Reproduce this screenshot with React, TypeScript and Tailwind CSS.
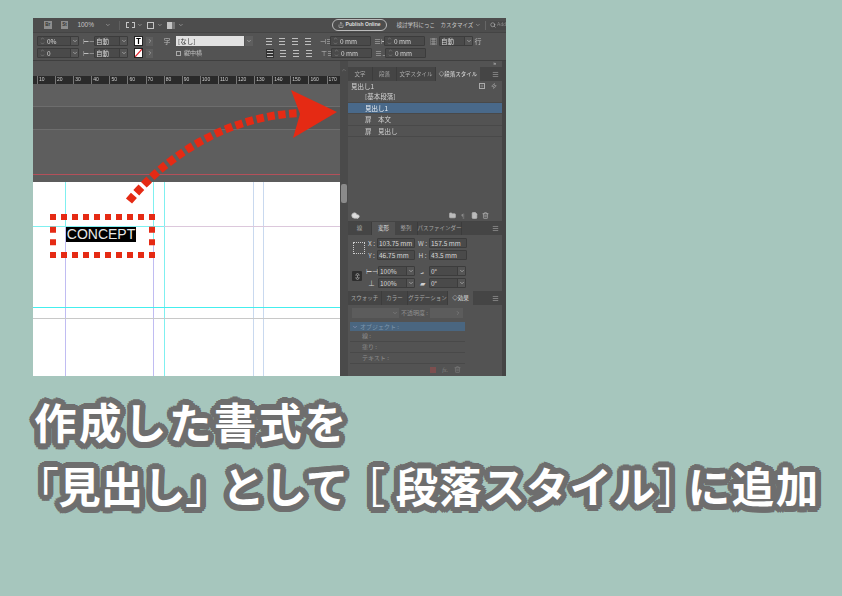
import { ChevronDown, ChevronRight, ChevronUp, Share, Search, Plus, Zap, Folder, Trash2, FilePlus, Cloud, Link2, Menu } from "lucide-react";
import type { ReactNode } from "react";

const jp = "font-['Noto_Sans_CJK_JP','Noto_Sans',sans-serif]";

function Spin() {
  return (
    <span className="flex flex-col items-center w-[8px] text-[#a8a8a8] shrink-0">
      <ChevronUp size={5} strokeWidth={2} />
      <ChevronDown size={5} strokeWidth={2} />
    </span>
  );
}

function Field({ w, children, spin, drop }: { w: string; children: ReactNode; spin?: boolean; drop?: boolean }) {
  return (
    <div className={`${w} h-[10px] flex items-center border border-[#3c3c3c] bg-[#4a4a4a] rounded-[1px] text-[6.5px] leading-none text-[#d8d8d8] shrink-0`}>
      {spin && <Spin />}
      <span className="pl-[1px] flex-1 whitespace-nowrap">{children}</span>
      {drop && (
        <span className="w-[8px] h-full flex items-center justify-center bg-[#555] border-l border-[#3c3c3c]">
          <ChevronDown size={6} strokeWidth={2.5} className="text-[#c0c0c0]" />
        </span>
      )}
    </div>
  );
}

function Lines({ dark }: { dark?: boolean }) {
  return (
    <span className={`w-[8px] h-[9px] flex flex-col justify-between py-[1px] px-[1px] shrink-0 ${dark ? "bg-[#333]" : ""}`}>
      <span className="h-[1px] bg-[#bdbdbd]" />
      <span className="h-[1px] bg-[#bdbdbd]" />
      <span className="h-[1px] bg-[#bdbdbd]" />
    </span>
  );
}

function Glyph({ c, w = "w-[8px]" }: { c: string; w?: string }) {
  return <span className={`${w} text-center text-[7px] leading-none text-[#bdbdbd] shrink-0`}>{c}</span>;
}

function TopBar() {
  return (
    <div className="h-[14px] flex items-center bg-[#4d4d4d] text-[#c4c4c4] text-[6.5px] pl-[11px]">
      <span className="w-[8px] h-[8px] bg-[#8d8d8d] text-[4.5px] leading-[8px] text-center text-[#333] font-bold">Br</span>
      <span className="ml-[9px] w-[8px] h-[8px] bg-[#8d8d8d] text-[4.5px] leading-[8px] text-center text-[#333] font-bold">St</span>
      <span className="ml-[9px] w-[26px]">100%</span>
      <ChevronDown size={6} className="ml-[3px]" />
      <span className="ml-[8px] w-[1px] h-[9px] bg-[#5f5f5f]" />
      <span className="ml-[6px] w-[9px] h-[6px] border border-dashed border-[#c4c4c4]" />
      <ChevronDown size={6} className="ml-[2px]" />
      <span className="ml-[4px] w-[8px] h-[7px] border border-[#c4c4c4]" />
      <ChevronDown size={6} className="ml-[3px]" />
      <span className="ml-[4px] w-[8px] h-[7px] bg-[#c4c4c4] border-r-[3px] border-[#777]" />
      <ChevronDown size={6} className="ml-[3px]" />
      <div className="ml-[148px] w-[57px] h-[12px] border border-[#bbb] rounded-full flex items-center justify-center gap-[2px] text-[5px] font-bold text-[#ddd] whitespace-nowrap">
        <Share size={6} />
        Publish Online
      </div>
      <span className={`ml-[10px] text-[5.5px] ${jp} whitespace-nowrap text-[#c8c8c8]`}>検討学科にっこ　カスタマイズ</span>
      <ChevronDown size={6} className="ml-[2px]" />
      <span className="ml-[4px] w-[1px] h-[9px] bg-[#666]" />
      <span className="ml-[4px] flex-1 h-[9px] bg-[#484848] flex items-center gap-[1px] text-[5px] text-[#888]">
        <Search size={6} className="text-[#ccc]" />
        Add
      </span>
    </div>
  );
}

function ControlPanel() {
  return (
    <div className={`h-[29px] bg-[#535353] border-t border-[#444] border-b border-b-[#3f3f3f] flex flex-col gap-[2px] pt-[3px] pl-[4px] ${jp}`}>
      <div className="flex items-center h-[10px]">
        <Field w="w-[42px]" spin drop>0%</Field>
        <Glyph c="⊢⊣" w="ml-[4px] w-[10px]" />
        <div className="ml-[1px]"><Field w="w-[34px]" drop>自動</Field></div>
        <span className="ml-[6px] w-[9px] h-[10px] bg-white border border-[#222] text-[8px] leading-[8px] font-bold text-center text-black">T</span>
        <span className="ml-[3px] w-[7px] h-[9px] flex items-center justify-center bg-[#5e5e5e]"><ChevronRight size={6} className="text-[#ccc]" /></span>
        <Glyph c="字" w="ml-[10px] w-[8px]" />
        <div className="ml-[5px] w-[68px] h-[10px] bg-[#e2e2e2] text-[#333] text-[6.5px] leading-[10px] pl-[2px]">[なし]</div>
        <span className="ml-[1px] w-[8px] h-[10px] flex items-center justify-center bg-[#5e5e5e]"><ChevronDown size={6} className="text-[#ccc]" /></span>
        <span className="ml-[12px] flex gap-[5px]"><Lines /><Lines /><Lines /><Lines /></span>
        <Glyph c="⊣≡" w="ml-[8px] w-[9px]" />
        <div className="ml-[1px]"><Field w="w-[41px]" spin>0 mm</Field></div>
        <Glyph c="≡⊢" w="ml-[3px] w-[9px]" />
        <div className="ml-[1px]"><Field w="w-[41px]" spin>0 mm</Field></div>
        <Glyph c="▦" w="ml-[4px] w-[9px]" />
        <div className="ml-[1px]"><Field w="w-[34px]" drop>自動</Field></div>
        <Glyph c="行" w="ml-[1px] w-[8px]" />
      </div>
      <div className="flex items-center h-[10px]">
        <Field w="w-[42px]" spin drop>0</Field>
        <Glyph c="⊢⊣" w="ml-[4px] w-[10px]" />
        <div className="ml-[1px]"><Field w="w-[34px]" drop>自動</Field></div>
        <svg viewBox="0 0 9 10" className="ml-[6px] w-[9px] h-[10px] bg-white border border-[#222]"><path d="M0 10 9 0" stroke="#e3262e" strokeWidth="1.6" /></svg>
        <span className="ml-[3px] w-[7px] h-[9px] flex items-center justify-center bg-[#5e5e5e]"><ChevronRight size={6} className="text-[#ccc]" /></span>
        <span className="ml-[23px] w-[5px] h-[5px] border border-[#aaa]" />
        <span className="ml-[3px] text-[6px] leading-none text-[#c4c4c4] whitespace-nowrap w-[82px]">縦中横</span>
        <span className="flex gap-[5px]"><Lines dark /><Lines /><Lines /><Lines /></span>
        <Glyph c="⊤≡" w="ml-[8px] w-[9px]" />
        <div className="ml-[1px]"><Field w="w-[41px]" spin>0 mm</Field></div>
        <Glyph c="≡⊥" w="ml-[3px] w-[9px]" />
        <div className="ml-[1px]"><Field w="w-[41px]" spin>0 mm</Field></div>
      </div>
    </div>
  );
}

function Ruler() {
  const labels = [10, 20, 30, 40, 50, 60, 70, 80, 90, 100, 110, 120, 130, 140, 150, 160, 170];
  return (
    <div className="h-[8px] bg-[#2a2a2a] flex pl-[4px] overflow-hidden">
      {labels.map((n) => (
        <span key={n} className="w-[18.1px] shrink-0 border-l border-[#777] pl-[1px] text-[5px] leading-[7px] text-[#cfcfcf]">{n}</span>
      ))}
    </div>
  );
}

function Canvas() {
  return (
    <div className="flex-1 flex flex-col">
      <Ruler />
      <div className="h-[23px] bg-[#5f5f5f] border-b border-[#6d6d6d]" />
      <div className="h-[23px] bg-[#565656] border-b border-[#6d6d6d]" />
      <div className="h-[45px] bg-[#5e5e5e] border-b border-[#b3505a]" />
      <div className="h-[7px] bg-[#5c5c5c]" />
      <div className="flex-1 bg-white relative">
        <span className="absolute left-[32px] top-0 w-[1px] h-[44px] bg-[#7ff0f0]" />
        <span className="absolute left-[32px] top-[44px] bottom-0 w-[1px] bg-[#c0bcf2]" />
        <span className="absolute left-[120px] top-0 bottom-0 w-[1px] bg-[#7ff0f0]" />
        <span className="absolute left-[131px] top-0 bottom-0 w-[1px] bg-[#7ff0f0]" />
        <span className="absolute left-[120px] top-[60px] bottom-0 w-[1px] bg-[#c0bcf2]" />
        <span className="absolute left-[220px] top-0 bottom-0 w-[1px] bg-[#c9d9ef]" />
        <span className="absolute left-[230px] top-0 bottom-0 w-[1px] bg-[#c9d9ef]" />
        <span className="absolute left-0 top-[44px] w-[131px] h-[1px] bg-[#7ff0f0]" />
        <span className="absolute left-[131px] right-0 top-[44px] h-[1px] bg-[#dcc8dc]" />
        <span className="absolute left-0 right-0 top-[125px] h-[1px] bg-[#44eeee]" />
        <span className="absolute left-0 right-0 top-[136px] h-[1px] bg-[#c8c8c8]" />
        <span className="absolute left-[33px] top-[45px] w-[70px] h-[15px] bg-black text-[#e8e8e8] text-[14px] leading-[15px] text-center font-['Liberation_Sans',sans-serif] whitespace-nowrap">CONCEPT</span>
      </div>
    </div>
  );
}

function Tabs({ items, active, h = "h-[14px]" }: { items: { t: string; w: string }[]; active: number; h?: string }) {
  return (
    <div className={`${h} flex items-stretch bg-[#454545] text-[5.5px] text-[#a8a8a8] whitespace-nowrap ${jp}`}>
      {items.map((it, i) => (
        <span key={it.t} className={`${it.w} flex items-center justify-center ${i === active ? "bg-[#535353] text-[#e0e0e0]" : "border-r border-[#3c3c3c]"}`}>
          {it.t}
        </span>
      ))}
      <span className="flex-1 flex items-center justify-end pr-[3px]"><Menu size={7} className="text-[#aaa]" /></span>
    </div>
  );
}

function StyleRow({ children, selected }: { children: ReactNode; selected?: boolean }) {
  return (
    <div className={`h-[11.5px] pl-[17px] flex items-center text-[6.5px] leading-none border-b border-[#494949] ${selected ? "bg-[#49698a] text-[#ecf1f6]" : "text-[#d4d4d4]"}`}>
      {children}
    </div>
  );
}

function ParagraphStyles() {
  return (
    <div className="flex-1 flex flex-col bg-[#535353]">
      <div className="h-[6px] flex justify-end pr-[6px] text-[5px] leading-[5px] text-[#ccc]">»</div>
      <Tabs
        active={3}
        items={[
          { t: "文字", w: "w-[25px]" },
          { t: "段落", w: "w-[24px]" },
          { t: "文字スタイル", w: "w-[39px]" },
          { t: "◇段落スタイル", w: "w-[44px]" },
        ]}
      />
      <div className={`flex-1 flex flex-col ${jp}`}>
        <div className="h-[10px] pl-[3px] pr-[5px] flex items-center justify-between text-[6.5px] text-[#d8d8d8] leading-none">
          見出し1
          <span className="flex gap-[6px] items-center text-[#bbb]"><Plus size={6} className="border border-[#aaa]" /><Zap size={6} /></span>
        </div>
        <StyleRow>[基本段落]</StyleRow>
        <StyleRow selected>見出し1</StyleRow>
        <StyleRow>扉　本文</StyleRow>
        <StyleRow>扉　見出し</StyleRow>
        <div className="flex-1" />
        <div className="h-[13px] flex items-center justify-between pl-[3px] pr-[13px] text-[#c0c0c0] border-b border-[#444]">
          <Cloud size={9} fill="#ddd" />
          <span className="flex gap-[4px]">
            <Folder size={7} fill="#bbb" />
            <span className="w-[7px] text-[6px] leading-[7px] text-[#888]">¶</span>
            <FilePlus size={7} fill="#bbb" />
            <Trash2 size={7} />
          </span>
        </div>
      </div>
    </div>
  );
}

function Label({ c, w }: { c: string; w: string }) {
  return <span className={`${w} text-[6.5px] leading-none text-[#cfcfcf] text-center shrink-0`}>{c}</span>;
}

function TransformPanel() {
  return (
    <div className={`h-[69px] flex flex-col bg-[#535353] ${jp}`}>
      <Tabs
        h="h-[13px]"
        active={1}
        items={[
          { t: "線", w: "w-[24px]" },
          { t: "変形", w: "w-[23px]" },
          { t: "整列", w: "w-[23px]" },
          { t: "パスファインダー", w: "w-[44px]" },
        ]}
      />
      <div className="flex pt-[3px] pl-[5px]">
        <span className="w-[12px] h-[12px] mt-[4px] border border-dotted border-[#ccc] shrink-0" />
        <div className="flex flex-col gap-[2px] ml-[1px]">
          <div className="flex items-center">
            <Label c="X :" w="w-[11px]" />
            <Field w="w-[38px]">103.75 mm</Field>
            <Label c="W :" w="w-[13px] ml-[1px]" />
            <Field w="w-[38px]">157.5 mm</Field>
          </div>
          <div className="flex items-center">
            <Label c="Y :" w="w-[11px]" />
            <Field w="w-[38px]">46.75 mm</Field>
            <Label c="H :" w="w-[13px] ml-[1px]" />
            <Field w="w-[38px]">43.5 mm</Field>
          </div>
        </div>
      </div>
      <div className="flex pt-[6px] pl-[4px]">
        <span className="w-[10px] h-[10px] mt-[5px] bg-[#2f2f2f] rounded-[1px] flex items-center justify-center shrink-0"><Link2 size={7} className="text-[#ccc] rotate-90" /></span>
        <div className="flex flex-col gap-[2px] ml-[3px]">
          <div className="flex items-center">
            <Label c="⊢⊣" w="w-[13px]" />
            <Field w="w-[37px]" drop>100%</Field>
            <Label c="⦟" w="w-[14px]" />
            <Field w="w-[37px]" drop>0°</Field>
          </div>
          <div className="flex items-center">
            <Label c="⊥" w="w-[13px]" />
            <Field w="w-[37px]" drop>100%</Field>
            <Label c="▰" w="w-[14px]" />
            <Field w="w-[37px]" drop>0°</Field>
          </div>
        </div>
      </div>
    </div>
  );
}

function EffectsPanel() {
  const rows = ["線 :", "塗り :", "テキスト :"];
  return (
    <div className={`h-[85px] flex flex-col bg-[#535353] ${jp}`}>
      <Tabs
        active={3}
        items={[
          { t: "スウォッチ", w: "w-[34px]" },
          { t: "カラー", w: "w-[26px]" },
          { t: "グラデーション", w: "w-[40px]" },
          { t: "◇効果", w: "w-[25px]" },
        ]}
      />
      <div className="flex items-center pt-[3px] pl-[4px] text-[6px] leading-none text-[#8f8f8f]">
        <span className="w-[47px] h-[10px] bg-[#5c5c5c] flex items-center justify-end pr-[1px]"><ChevronDown size={6} /></span>
        <span className="w-[31px] pl-[2px] whitespace-nowrap">不透明度 :</span>
        <span className="w-[33px] h-[10px] bg-[#5c5c5c] flex items-center justify-end pr-[2px]"><ChevronRight size={6} /></span>
      </div>
      <div className="mt-[4px] ml-[2px] w-[115px] flex flex-col text-[6px] leading-none text-[#8f8f8f]">
        <div className="h-[9px] bg-[#4a6680] flex items-center pl-[2px] gap-[2px] text-[#7d96ad]">
          <ChevronDown size={6} className="text-[#aac]" />
          オブジェクト :
        </div>
        {rows.map((r) => (
          <div key={r} className="h-[11px] flex items-center pl-[12px] border-b border-[#494949]">{r}</div>
        ))}
      </div>
      <div className="flex justify-end w-[117px] gap-[6px] pt-[2px] pr-[4px] text-[#808080]">
        <span className="w-[6px] h-[6px] mt-[1px] bg-[#7c4f4f]" />
        <span className="text-[6px] italic leading-[8px] font-['Liberation_Serif',serif]">fx.</span>
        <Trash2 size={7} />
      </div>
    </div>
  );
}

function Overlay() {
  return (
    <svg viewBox="0 0 842 596" className="absolute inset-0 w-[842px] h-[596px] pointer-events-none">
      <g fill="none" stroke="#e52a14" strokeWidth="6">
        <path d="M50 217H155M50 255H155" strokeDasharray="6 5" />
        <path d="M53 214V258M152 214V258" strokeDasharray="6 6.67" />
      </g>
      <path d="M129 201C172 150 232 116 300 113" fill="none" stroke="#e52a14" strokeWidth="8" strokeDasharray="7.5 3.5" />
      <path d="M291 90 337 112 293 138 300 114Z" fill="#e52a14" />
    </svg>
  );
}

export default function App() {
  return (
    <div className="relative w-[842px] h-[596px] overflow-hidden bg-[#a6c6bd] flex flex-col items-start pt-[18px] pl-[33px]">
      <div className="w-[473px] h-[358px] flex flex-col bg-[#535353] font-['Liberation_Sans',sans-serif] [filter:blur(0.25px)]">
        <TopBar />
        <ControlPanel />
        <div className="flex-1 flex min-h-0">
          <div className="w-[307px] flex flex-col">
            <div className="h-[15px] bg-[#535353]" />
            <Canvas />
          </div>
          <div className="w-[8px] bg-[#4a4a4a] flex flex-col items-center pt-[6px]">
            <ChevronUp size={6} className="text-[#888]" />
            <span className="mt-[111px] w-[6px] h-[19px] bg-[#8a8a8a] rounded-[2px]" />
          </div>
          <div className="w-[154px] flex flex-col">
            <ParagraphStyles />
            <TransformPanel />
            <EffectsPanel />
          </div>
          <div className="w-[4px] bg-[#444]" />
        </div>
      </div>
      {/* ring of shadows gives the rounded grey outline */}
      <h1 className={`mt-[13px] ml-[1px] text-[42.5px] leading-[64px] font-bold text-white whitespace-nowrap [text-shadow:6px_0_#6e6e6e,5.5px_2.3px_#6e6e6e,4.2px_4.2px_#6e6e6e,2.3px_5.5px_#6e6e6e,0_6px_#6e6e6e,-2.3px_5.5px_#6e6e6e,-4.2px_4.2px_#6e6e6e,-5.5px_2.3px_#6e6e6e,-6px_0_#6e6e6e,-5.5px_-2.3px_#6e6e6e,-4.2px_-4.2px_#6e6e6e,-2.3px_-5.5px_#6e6e6e,0_-6px_#6e6e6e,2.3px_-5.5px_#6e6e6e,4.2px_-4.2px_#6e6e6e,5.5px_-2.3px_#6e6e6e,3px_0_#6e6e6e,2.1px_2.1px_#6e6e6e,0_3px_#6e6e6e,-2.1px_2.1px_#6e6e6e,-3px_0_#6e6e6e,-2.1px_-2.1px_#6e6e6e,0_-3px_#6e6e6e,2.1px_-2.1px_#6e6e6e] ${jp}`}>
        <span className="block tracking-[2.5px]">作成した書式を</span>
        <span className="block ml-[3px]">
          <span className="font-normal [font-feature-settings:'palt']">「</span>見出し<span className="font-normal [font-feature-settings:'palt']">」</span>
          <span className="ml-[15px]">として</span>
          <span className="ml-[15px] font-normal [font-feature-settings:'palt']">［</span>
          <span className="ml-[11px] tracking-[1px]">段落スタイル</span>
          <span className="ml-[1px] font-normal [font-feature-settings:'palt']">］</span>
          <span className="ml-[9px] tracking-[1.5px]">に追加</span>
        </span>
      </h1>
      <Overlay />
    </div>
  );
}
